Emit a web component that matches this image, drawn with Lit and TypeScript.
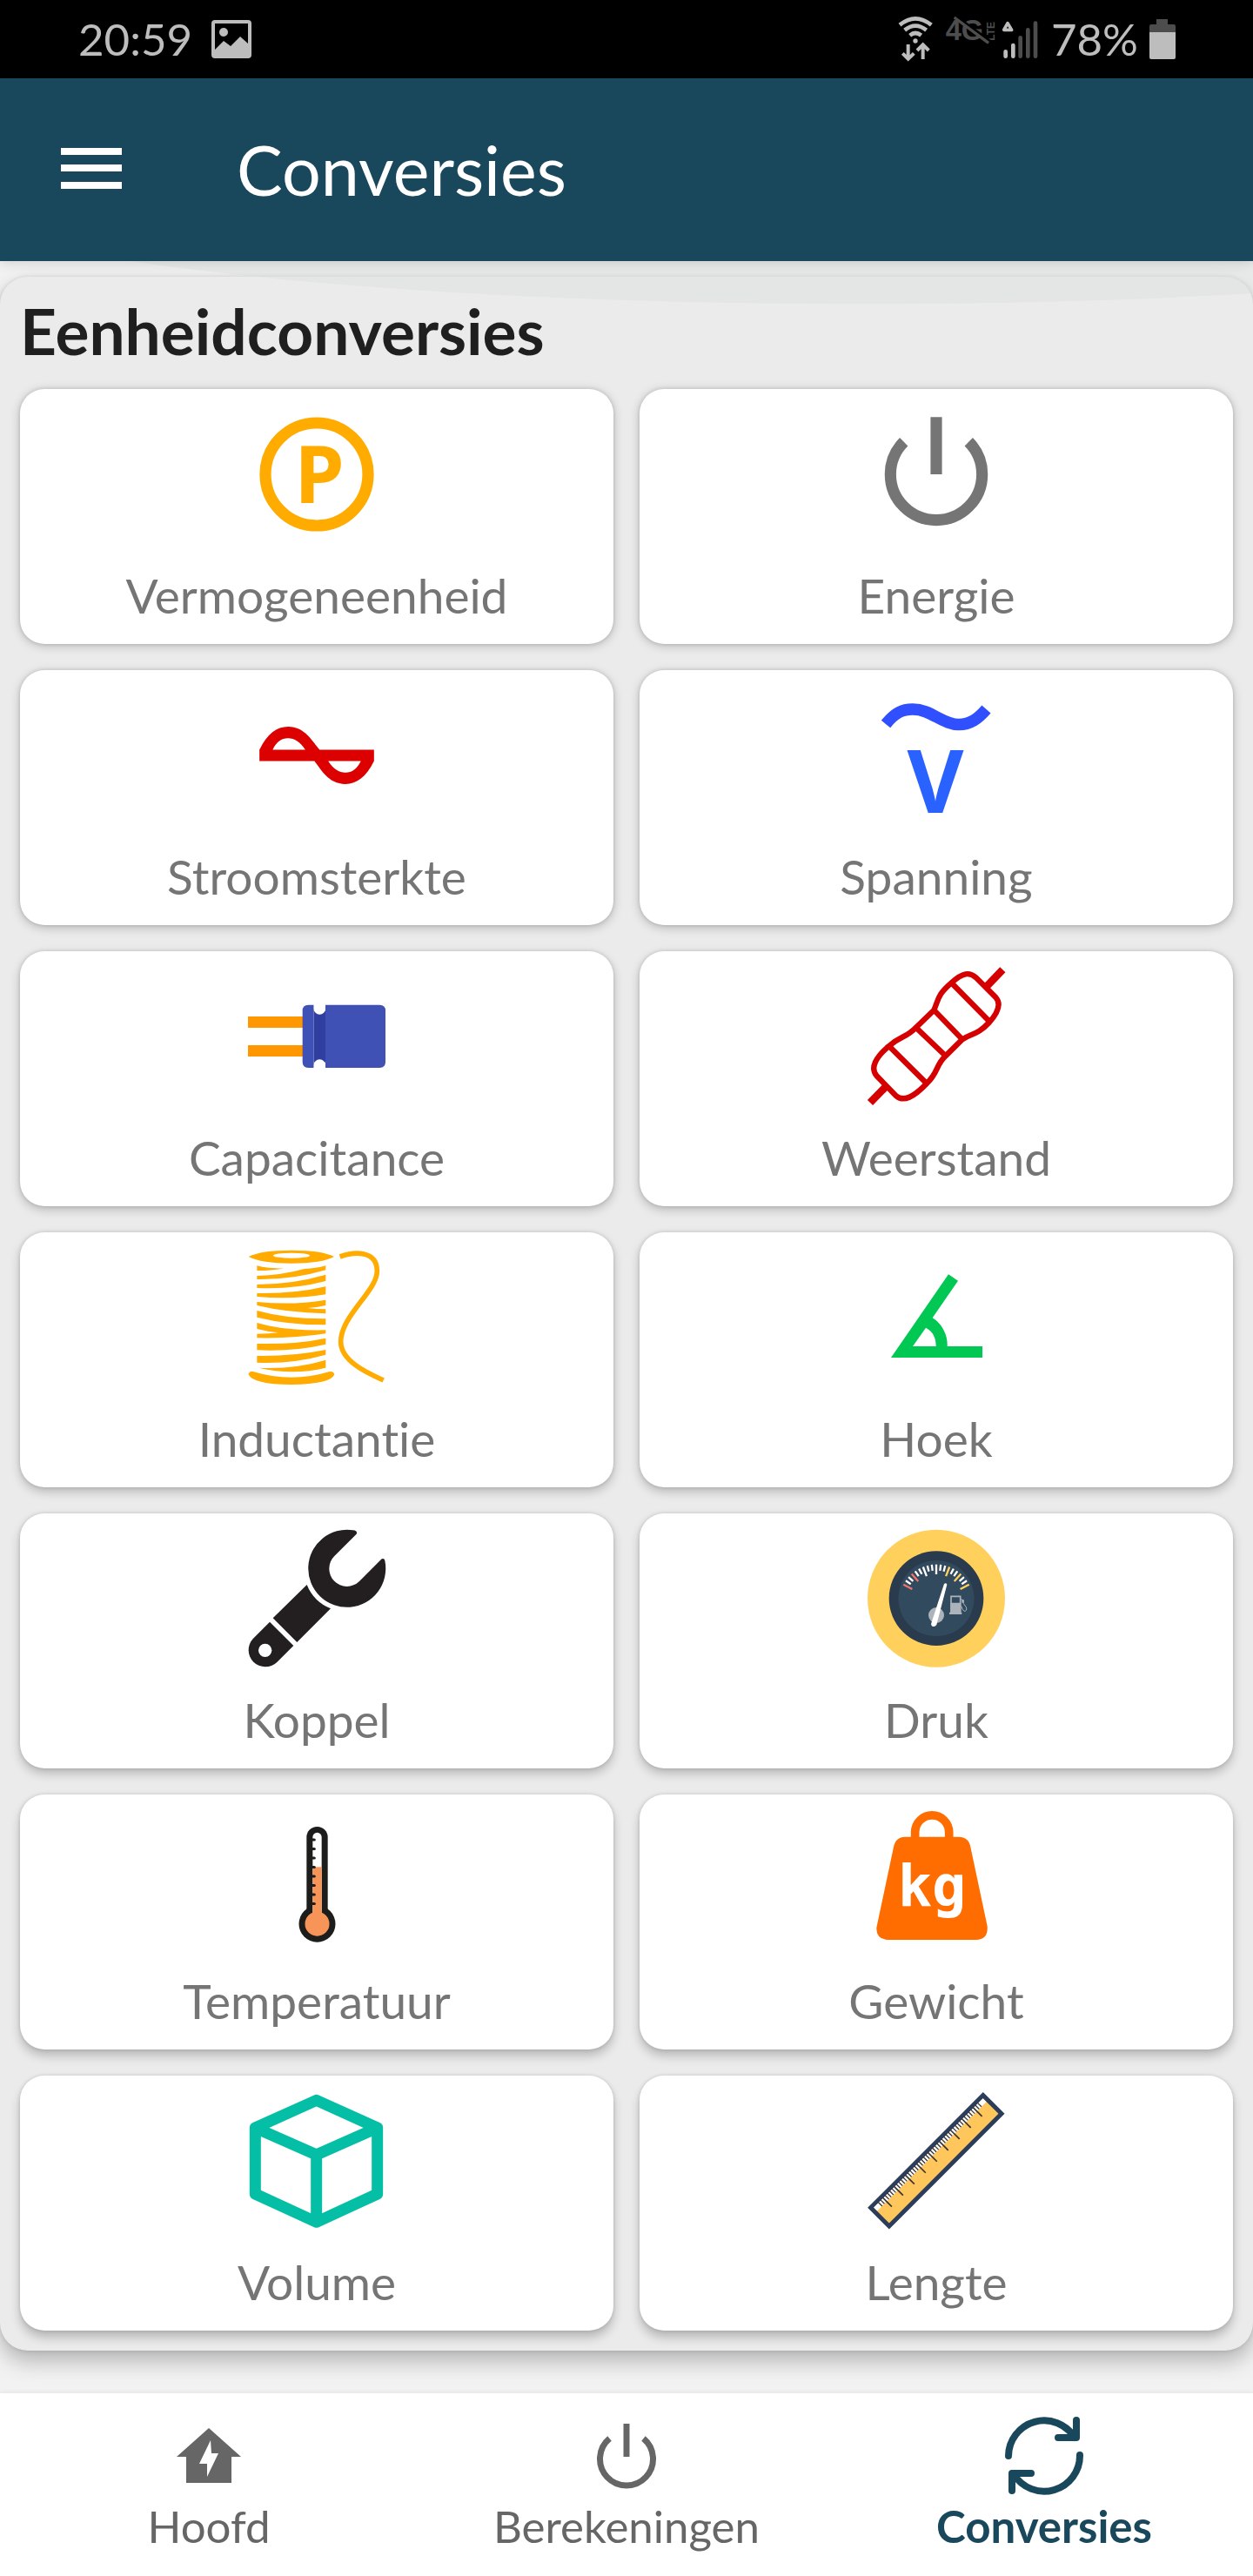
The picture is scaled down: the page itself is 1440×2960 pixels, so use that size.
import { LitElement, html, svg, css, type TemplateResult } from "lit";
import { customElement, property } from "lit/decorators.js";
import { classMap } from "lit/directives/class-map.js";
import { styleMap } from "lit/directives/style-map.js";

interface Conversion {
  label: string;
  viewBox: string;
  art: TemplateResult;
}

const gaugeTicks = Array.from({ length: 19 }, (_, i) => {
  const major = i % 3 === 0;
  const color = i === 0 || i === 3 ? "#f2726b" : i >= 12 && major ? "#ffd05b" : "#fff";
  return svg`<path d="M348 173V${major ? 207 : 194}" stroke=${color} stroke-width="7"
    transform="rotate(${(i - 9) * 7} 348 300)"></path>`;
});

const rulerTicks = Array.from({ length: 45 }, (_, i) => {
  const major = i % 5 === 2;
  return svg`<path d="M${-242 + i * 11} -40V${major ? 4 : -21}" stroke="#3a3430"
    stroke-width=${major ? 5 : 4}></path>`;
});

const thermoTicks = Array.from(
  { length: 8 },
  (_, i) => svg`<path d="M350 ${1122 + i * 31.5}h14" stroke="#1d1d1b" stroke-width="9" stroke-linecap="round"></path>`
);

const conversions: Conversion[] = [
  {
    label: "Vermogeneenheid",
    viewBox: "0 0 158 158",
    art: svg`<circle cx="79" cy="79" r="59" fill="none" stroke="#ffab00" stroke-width="13.2"></circle>
      <text x="82" y="112" text-anchor="middle" font-family="Noto Sans, sans-serif" font-weight="700"
        font-size="92" fill="#ffab00">P</text>`,
  },
  {
    label: "Energie",
    viewBox: "0 0 24 24",
    art: svg`<path d="M12 2V12M6.34 6.34A8 8 0 1 0 17.66 6.34" fill="none" stroke="#757575" stroke-width="2"></path>`,
  },
  {
    label: "Stroomsterkte",
    viewBox: "0 0 24 24",
    art: svg`<path fill="#dd0000" fill-rule="evenodd" d="M2 11C3.4 8.2 5 7 7 7C10 7 11.2 9.6 12.5 11H22V13C20.6 15.8 19 17 17 17
      C14 17 12.8 14.5 11.6 13H2ZM4.3 11H10C9.1 9.6 8.1 9 7 9C5.8 9 5 9.6 4.3 11ZM14 13H19.7C19 14.4 18.2 15 17 15C15.9 15 14.9 14.4 14 13Z"></path>`,
  },
  {
    label: "Spanning",
    viewBox: "0 0 158 158",
    art: svg`<path d="M21 43C31.5 30 40 26 52 26C73 26 86 43.5 105 43.5C118 43.5 127 37 136.500 26" fill="none"
        stroke="#304ffe" stroke-width="13.4"></path>
      <text x="78" y="145" text-anchor="middle" font-family="Noto Sans, sans-serif" font-weight="700"
        font-size="100" fill="#2962ff">V</text>`,
  },
  {
    label: "Capacitance",
    viewBox: "135 36 474 474",
    art: svg`<path d="M135 204H326V243H135ZM135 303H326V342H135Z" fill="#ff9800"></path>
      <path d="M362 184H402V362H362Z" fill="#303f9f"></path>
      <path d="M343 164H362V381H343Q323 381 323 361V184Q323 164 343 164ZM402 164H589Q609 164 609 184V361Q609 381 589 381H402Z" fill="#3f51b5"></path>
      <path d="M362 164V177A20 20 0 0 0 402 177V164ZM362 381V372A20 20 0 0 1 402 372V381Z" fill="#fff"></path>`,
  },
  {
    label: "Weerstand",
    viewBox: "111 66 474 474",
    art: svg`<g fill="none" stroke="#d50000" stroke-width="19">
      <path d="M340 212C358 170 352 160 400 118C440 82 462 80 485 100L553 168C574 192 560 222 530 255C490 298 470 292 438 313L380 370
        C345 402 357 425 315 465C270 512 236 530 210 508L142 438C120 412 138 375 185 336C225 300 245 308 278 272Z"></path>
      <path d="M400 118L530 250M340 212L438 313M278 272L380 370M185 336L315 465"></path>
      <path d="M577 73L520 132M120 531L178 472" stroke-width="26"></path></g>`,
  },
  {
    label: "Inductantie",
    viewBox: "135 1005 474 474",
    art: svg`<g fill="#ffab00">
      <path fill-rule="evenodd" d="M137 1032Q180 1010 285 1010T432 1032Q390 1055 285 1055T137 1032ZM222 1028A63 9 0 0 0 348 1028A63 9 0 0 0 222 1028Z"></path>
      <path d="M166 1063Q200 1073 258 1073Q200 1081 166 1080Z"></path>
      <path d="M166 1098Q250 1096 330 1074Q370 1073 403 1063V1078Q290 1112 166 1110Z"></path>
      <path d="M166 1128Q290 1127 403 1094V1116Q290 1146 166 1140Z"></path>
      <path d="M166 1158Q290 1161 403 1135V1162Q290 1181 166 1170Z"></path>
      <path d="M166 1188Q290 1200 403 1181V1200Q370 1208 340 1209Q370 1213 403 1213V1228Q270 1225 166 1200Z"></path>
      <path d="M166 1218Q270 1247 403 1246V1267Q270 1267 166 1241Z"></path>
      <path d="M166 1260Q260 1288 403 1285V1297Q290 1315 166 1312V1298Q210 1298 240 1294Q200 1290 166 1281Z"></path>
      <path d="M166 1332Q300 1335 403 1313V1334Q290 1360 166 1354Z"></path>
      <path d="M166 1374Q290 1376 403 1353V1370Q290 1402 166 1397Z"></path>
      <path d="M172 1415Q300 1420 403 1388V1415Q290 1442 172 1415Z"></path>
      <path d="M136 1436Q143 1424 155 1429Q285 1468 414 1429Q428 1425 433 1438Q420 1472 285 1473Q150 1472 136 1436Z"></path></g>
      <path d="M452 1032C500 1015 580 1008 580 1082C580 1150 455 1236 455 1325C455 1390 540 1430 602 1458" fill="none" stroke="#ffab00" stroke-width="17"></path>`,
  },
  {
    label: "Hoek",
    viewBox: "111 1035 474 474",
    art: svg`<path fill="#00c853" fill-rule="evenodd" d="M192 1410L390 1123L423 1145L335 1273A110 110 0 0 1 386 1371H507V1410ZM267 1371H347Q347 1325 312 1307Z"></path>`,
  },
  {
    label: "Koppel",
    viewBox: "135 54 474 474",
    art: svg`<g fill="#231f20">
      <path d="M497 55Q514 57 509 68L433 144A60 60 0 0 0 519 231L596 154Q605 150 607 160A133.500 133.500 0 1 1 497 55Z"></path>
      <path d="M338 243A149 149 0 0 0 420 325L304 441L221 358Z"></path>
      <path d="M210 371L292 453L235 510A58 58 0 0 1 153 428Z"></path></g>
      <circle cx="194" cy="469" r="23" fill="#fff"></circle>`,
  },
  {
    label: "Druk",
    viewBox: "111 54 474 474",
    art: svg`<circle cx="348" cy="290" r="237" fill="#ffd05b"></circle>
      <circle cx="348" cy="290" r="163" fill="#293b4d"></circle>
      <circle cx="348" cy="290" r="131" fill="#324a5e"></circle>
      ${gaugeTicks}
      <circle cx="348" cy="348" r="27" fill="#acb3ba"></circle>
      <path d="M375 240Q383 234 385 242L349 381Q343 390 334 386Q328 382 331 375Z" fill="#fff"></path>
      <path d="M399 343V283H431V343" fill="#324a5e" stroke="#acb3ba" stroke-width="5"></path>
      <path d="M397 305H433V338H436V345H393V338H397Z" fill="#acb3ba"></path>
      <path d="M433 292L442 298V308L451 320Q455 335 444 334Q438 330 434 316" fill="none" stroke="#acb3ba" stroke-width="3"></path>
      <path d="M436 294H443V305H436Z" fill="#acb3ba"></path>`,
  },
  {
    label: "Temperatuur",
    viewBox: "135 1023 474 474",
    art: svg`<circle cx="373.500" cy="1412" r="63" fill="#1d1d1b"></circle>
      <rect x="337" y="1077" width="73" height="320" rx="36" fill="#1d1d1b"></rect>
      <path d="M358 1380V1113A15.500 15.500 0 0 1 389 1113V1380Z" fill="#fff"></path>
      <path d="M358 1216H389V1400H358Z" fill="#f79558"></path>
      <circle cx="373.500" cy="1412" r="42" fill="#f79558"></circle>
      ${thermoTicks}`,
  },
  {
    label: "Gewicht",
    viewBox: "111 1023 474 474",
    art: svg`<path d="M275 1120V1096A58.500 58.500 0 0 1 392 1096V1120" fill="none" stroke="#ff6d00" stroke-width="29"></path>
      <path d="M240 1112H425Q460 1112 466 1147L524 1420Q528 1466 485 1467H180Q140 1464 142 1425L201 1147Q208 1112 240 1112Z" fill="#ff6d00"></path>
      <text x="333" y="1349" text-anchor="middle" font-family="DejaVu Sans Mono, monospace" font-weight="700" font-size="196" fill="#fff">kg</text>`,
  },
  {
    label: "Volume",
    viewBox: "135 72 474 474",
    art: svg`<path d="M371 100L581 195V423L371 520L160 423V195ZM160 195L371 288L581 195M371 288V520" fill="none"
      stroke="#04bfa5" stroke-width="39" stroke-linejoin="round"></path>`,
  },
  {
    label: "Lengte",
    viewBox: "111 72 474 474",
    art: svg`<g transform="translate(347.500 308.500) rotate(-45)">
      <rect x="-274" y="-45" width="548" height="90" fill="#ffc65c" stroke="#2b3d5b" stroke-width="15"></rect>
      <path d="M-266 -38H266V-21H-266Z" fill="#fff"></path>
      ${rulerTicks}</g>`,
  },
];

@customElement("conversion-card")
class ConversionCard extends LitElement {
  static styles = css`
    :host {
      display: block;
    }
    .card {
      display: flex;
      flex-direction: column;
      align-items: center;
      width: 100%;
      height: 293px;
      padding: 19px 16px 0;
      border: 0;
      border-radius: 28px;
      background: #fff;
      color: #757575;
      font: inherit;
      font-size: 55px;
      line-height: 64px;
      box-shadow: 0 0 4px rgba(0, 0, 0, 0.14), 0 var(--drop) 12px rgba(0, 0, 0, 0.22);
      cursor: pointer;
    }
    .icon {
      width: 158px;
      height: 158px;
      flex: none;
      overflow: visible;
    }
    .label {
      padding-top: 28px;
    }
  `;

  @property({ attribute: false }) item!: Conversion;
  @property({ type: Number }) row = 0;

  render() {
    return html`<button class="card" type="button" style=${styleMap({ "--drop": `${2 + this.row}px` })}>
      <svg class="icon" viewBox=${this.item.viewBox} aria-hidden="true">${this.item.art}</svg>
      <span class="label">${this.item.label}</span>
    </button>`;
  }
}

const tabs = [
  {
    label: "Hoofd",
    active: false,
    art: svg`<path fill="#666" fill-rule="evenodd" d="M50 15L87 48H76V78H24V48H13ZM52 29L39 56H48V71L61 44H53Z"></path>`,
  },
  {
    label: "Berekeningen",
    active: false,
    art: svg`<path d="M50 10V48M30.500 27A30.500 30.500 0 1 0 69.500 27" fill="none" stroke="#666" stroke-width="7"></path>`,
  },
  {
    label: "Conversies",
    active: true,
    art: svg`<path d="M9 47A41 41 0 0 1 85 26M87 6V26H66M91 46A41 41 0 0 1 15 68M13 87V67H35" fill="none"
      stroke="#19475c" stroke-width="8" stroke-linecap="round" stroke-linejoin="round"></path>`,
  },
];

@customElement("app-root")
class AppRoot extends LitElement {
  static styles = css`
    :host {
      display: flex;
      flex-direction: column;
      min-height: 100vh;
      background: #f2f2f2;
      font-family: Lato, "Open Sans", sans-serif;
      font-variant-ligatures: none;
    }
    .status {
      display: flex;
      align-items: center;
      justify-content: space-between;
      height: 90px;
      padding: 0 88px 0 90px;
      background: #000;
      color: #bdbdbd;
      font-size: 51px;
      line-height: 60px;
    }
    .group {
      display: flex;
      align-items: center;
      gap: 22px;
    }
    .right {
      gap: 12px;
    }
    .picture {
      width: 46px;
      height: 44px;
    }
    .signals {
      width: 164px;
      height: 90px;
    }
    .battery {
      width: 32px;
      height: 48px;
    }
    .bar {
      position: relative;
      z-index: 1;
      display: flex;
      align-items: center;
      gap: 132px;
      height: 210px;
      padding: 0 70px;
      background: #19475c;
      color: #fff;
      box-shadow: 0 1px 14px rgba(0, 0, 0, 0.16);
    }
    .menu {
      width: 70px;
      height: 70px;
      padding: 0;
      border: 0;
      background: none;
      cursor: pointer;
    }
    .menu svg {
      display: block;
      width: 70px;
      height: 70px;
    }
    .title {
      margin: 0;
      font-size: 79px;
      font-weight: 400;
      line-height: 96px;
    }
    .content {
      position: relative;
      flex: 1;
      padding: 18px 0 49px;
    }
    .wave {
      position: absolute;
      top: 0;
      left: 0;
      width: 100%;
      height: 50px;
    }
    .panel {
      padding: 14px 23px 23px;
      border-radius: 32px;
      background: #ebebeb;
      box-shadow: 0 0 5px rgba(0, 0, 0, 0.12), 0 12px 24px rgba(0, 0, 0, 0.26);
    }
    .heading {
      margin: 0;
      padding-bottom: 19px;
      color: #1f1f1f;
      font-size: 73px;
      font-weight: 700;
      line-height: 96px;
    }
    .grid {
      display: grid;
      grid-template-columns: 1fr 1fr;
      gap: 30px;
    }
    .tabs {
      display: grid;
      grid-template-columns: repeat(3, 1fr);
      height: 210px;
      background: #fff;
      box-shadow: 0 0 6px rgba(0, 0, 0, 0.08);
    }
    .tab {
      display: flex;
      flex-direction: column;
      align-items: center;
      padding-top: 25px;
      color: #666;
      font-size: 51px;
      line-height: 56px;
      text-decoration: none;
    }
    .active {
      color: #19475c;
      font-weight: 700;
    }
    .tab svg {
      width: 100px;
      height: 100px;
    }
  `;

  render() {
    return html`
      <div class="status">
        <div class="group">
          <span>20:59</span>
          <svg class="picture" viewBox="0 0 46 44" aria-hidden="true">
            <path fill="#bdbdbd" fill-rule="evenodd" d="M4 0H42Q46 0 46 4V40Q46 44 42 44H4Q0 44 0 40V4Q0 0 4 0ZM4 4V34L14 24L22 30L33 19L42 27V4Z"></path>
            <circle cx="14" cy="14" r="5" fill="#bdbdbd"></circle>
          </svg>
        </div>
        <div class="group right">
          <svg class="signals" viewBox="88 0 492 270" aria-hidden="true">
            <g fill="none" stroke="#bdbdbd" stroke-width="14">
              <path d="M94 86Q148 42 203 86M111 104Q148 74 186 104M129 122Q148 106 168 122"></path>
              <path d="M123 153V203M104 184L123 203L143 184M174 204V155M154 174L174 154L194 174" stroke-width="12"></path>
              <path d="M453 103L466 80L480 103Z" stroke-width="11" stroke-linejoin="round"></path>
              <path d="M459 178V194M485 156V194" stroke-linecap="round"></path>
              <path d="M510 130V194M536 103V194M562 80V194" stroke="#4d4d4d" stroke-linecap="round"></path>
            </g>
            <circle cx="148" cy="141" r="8" fill="#bdbdbd"></circle>
            <g fill="#4d4d4d" font-family="Liberation Sans, sans-serif" font-weight="700">
              <text x="252" y="138" font-size="98">4G</text>
              <text x="0" y="0" font-size="36" transform="translate(420 140) rotate(-90)">LTE</text>
            </g>
            <path d="M288 56L406 142" stroke="#000" stroke-width="9"></path>
            <path d="M282 60L400 148" stroke="#4d4d4d" stroke-width="10"></path>
          </svg>
          <div class="group right">
            <span>78%</span>
            <svg class="battery" viewBox="0 0 32 48" aria-hidden="true">
              <path fill="#4d4d4d" d="M9 1H22V7H29Q31 7 31 9V17H1V9Q1 7 3 7H9Z"></path>
              <path fill="#bdbdbd" d="M1 16H31V45Q31 47 29 47H3Q1 47 1 45Z"></path>
            </svg>
          </div>
        </div>
      </div>
      <header class="bar">
        <button class="menu" type="button" aria-label="Menu">
          <svg viewBox="0 0 70 70"><path fill="#fff" d="M0 10H70V18H0ZM0 29H70V37H0ZM0 49H70V57H0Z"></path></svg>
        </button>
        <h1 class="title">Conversies</h1>
      </header>
      <main class="content">
        <section class="panel">
          <h2 class="heading">Eenheidconversies</h2>
          <div class="grid">
            ${conversions.map(
              (item, i) => html`<conversion-card .item=${item} .row=${Math.floor(i / 2)}></conversion-card>`
            )}
          </div>
        </section>
        <svg class="wave" viewBox="0 0 1440 50" preserveAspectRatio="none" aria-hidden="true">
          <path d="M150 0C500 52 1050 60 1440 37V0Z" fill="#d2dcd8" fill-opacity="0.3"></path>
        </svg>
      </main>
      <nav class="tabs">
        ${tabs.map(
          (tab) => html`<a class=${classMap({ tab: true, active: tab.active })} href="#">
            <svg viewBox="0 0 100 100" aria-hidden="true">${tab.art}</svg>
            <span>${tab.label}</span>
          </a>`
        )}
      </nav>
    `;
  }
}
